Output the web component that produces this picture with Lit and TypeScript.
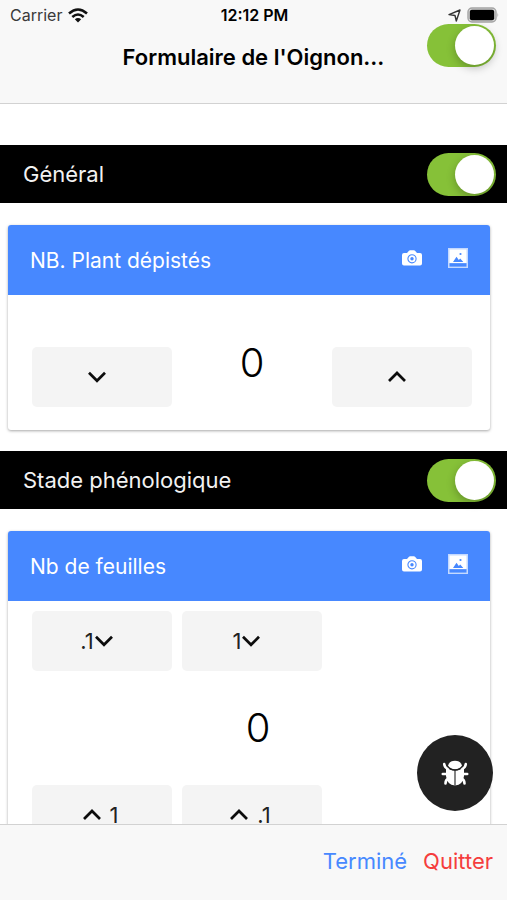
import { LitElement, html, css, svg } from "lit";
import { customElement, property } from "lit/decorators.js";

const chevronDown = html`<svg class="chevron" viewBox="0 0 20 20" aria-hidden="true">
  <path d="M2 5.800 L10 13.800 L18 5.800" fill="none" stroke="#0c0c0c" stroke-width="2.700" />
</svg>`;

const chevronUp = html`<svg class="chevron" viewBox="0 0 20 20" aria-hidden="true">
  <path d="M2 14 L10 6 L18 14" fill="none" stroke="#0c0c0c" stroke-width="2.700" />
</svg>`;

const cameraIcon = html`<svg viewBox="0 0 20 16" width="20" height="16" aria-hidden="true">
  <path d="M2 3 H5 L7 .8 Q7.400 .3 8 .3 H12 Q12.600 .3 13 .8 L15 3 H18 Q20 3 20 5 V13.500 Q20 15.500 18 15.500 H2 Q0 15.500 0 13.500 V5 Q0 3 2 3 Z" fill="#fff" />
  <circle cx="10" cy="8.800" r="4.100" fill="none" stroke="#4788ff" stroke-width="1.100" />
  <circle cx="10" cy="8.800" r="1.700" fill="#4788ff" />
</svg>`;

const pictureIcon = html`<svg viewBox="0 0 20 20" width="20" height="20" aria-hidden="true">
  <path d="M0 0 H20 V20 H0 Z" fill="#c4d9ff" />
  <path d="M1.500 1.500 H18.500 V15 H1.500 Z" fill="#fff" />
  <path d="M1.500 15.200 H18.500 V18.600 H1.500 Z" fill="#4788ff" />
  <path d="M5 14 L8.500 8.800 L10.800 12 L12.200 10.600 L15.300 14 Z" fill="#4788ff" />
  <circle cx="12.500" cy="6" r="1.100" fill="#4788ff" />
</svg>`;

const bugLegs = svg`<path d="M3.200 4 Q3.500 7.500 7 9 M24.800 4 Q24.500 7.500 21 9 M6 14 H1.800 M22 14 H26.200 M7 19 Q4.500 20 4.500 23.500 M21 19 Q23.500 20 23.500 23.500"
  fill="none" stroke="#fff" stroke-width="2.600" stroke-linecap="round" />`;

const bugIcon = html`<svg viewBox="0 0 28 26" width="28" height="26" aria-hidden="true">
  ${bugLegs}
  <path d="M7 5.500 Q8.500 .8 14 .8 Q19.500 .8 21 5.500 Q18.500 9.300 14 9.300 Q9.500 9.300 7 5.500 Z" fill="#fff" />
  <path d="M5 7 Q9 10.800 14 10.800 Q19 10.800 23 7 V16 Q22 25 14 25.500 Q6 25 5 16 Z" fill="#fff" />
  <path d="M5.500 5.500 Q9 10 14 10 Q19 10 22.500 5.500 M14 10 V25.500" fill="none" stroke="#222" stroke-width="1.100" />
</svg>`;

const switchStyles = css`
  .switch {
    appearance: none;
    flex: none;
    display: flex;
    justify-content: flex-start;
    box-sizing: border-box;
    width: 69px;
    height: 43px;
    margin: 0;
    padding: 2px;
    border-radius: 22px;
    background: #c8c8c8;
    cursor: pointer;
  }
  .switch:checked {
    background: #86c138;
    justify-content: flex-end;
  }
  .switch::before {
    content: "";
    width: 39px;
    height: 39px;
    border-radius: 50%;
    background: #fff;
    box-shadow: 0 3px 8px rgba(0, 0, 0, 0.25);
  }
`;

@customElement("section-bar")
class SectionBar extends LitElement {
  @property() heading = "";

  static styles = [
    switchStyles,
    css`
      :host {
        display: block;
      }
      .bar {
        display: flex;
        align-items: center;
        justify-content: space-between;
        height: 58px;
        padding: 0 11px 0 23px;
        background: #000;
        color: #f2f2f2;
        font-size: 22px;
      }
    `,
  ];

  render() {
    return html`<label class="bar">
      <span>${this.heading}</span>
      <input class="switch" type="checkbox" checked />
    </label>`;
  }
}

@customElement("counter-card")
class CounterCard extends LitElement {
  @property() heading = "";
  @property({ type: Boolean }) fine = false;
  @property({ type: Number }) value = 0;

  static styles = css`
    :host {
      display: block;
      margin: 22px 17px 21px 8px;
      border-radius: 3px;
      background: #fff;
      box-shadow: 0 1px 3px rgba(0, 0, 0, 0.35);
    }
    .head {
      display: flex;
      align-items: center;
      gap: 26px;
      height: 70px;
      padding: 0 22px;
      border-radius: 3px 3px 0 0;
      background: #4788ff;
      color: #fff;
    }
    h2 {
      flex: 1;
      margin: 0;
      font-size: 21px;
      font-weight: 400;
    }
    .tool {
      display: flex;
      margin: 0 0 4px;
      padding: 0;
      border: 0;
      background: none;
    }
    .body {
      display: grid;
      grid-template-columns: repeat(3, 1fr);
      column-gap: 10px;
      padding: 52px 18px 23px 24px;
    }
    .body.fine {
      padding-top: 10px;
    }
    .step {
      display: flex;
      align-items: center;
      justify-content: center;
      height: 60px;
      padding: 0 10px 0 0;
      border: 0;
      border-radius: 5px;
      background: #f4f4f4;
      color: #222;
      font: inherit;
      font-size: 22px;
    }
    .fine .up {
      grid-row: 3;
      gap: 8px;
      padding: 0 4px 0 0;
    }
    .chevron {
      width: 20px;
      height: 20px;
    }
    .value {
      color: #000;
      font-size: 40px;
      font-weight: 300;
      line-height: 32px;
      text-align: center;
    }
    .fine .value {
      grid-column: 2;
      padding-left: 12px;
      line-height: 114px;
    }
  `;

  private add(amount: number) {
    this.value = Math.max(0, Math.round((this.value + amount) * 10) / 10);
  }

  private plainBody() {
    return html`<div class="body">
      <button class="step" aria-label="Diminuer" @click=${() => this.add(-1)}>${chevronDown}</button>
      <output class="value">${this.value}</output>
      <button class="step" aria-label="Augmenter" @click=${() => this.add(1)}>${chevronUp}</button>
    </div>`;
  }

  private fineBody() {
    return html`<div class="body fine">
      <button class="step" @click=${() => this.add(-0.1)}>.1${chevronDown}</button>
      <button class="step" @click=${() => this.add(-1)}>1${chevronDown}</button>
      <output class="value">${this.value}</output>
      <button class="step up" @click=${() => this.add(1)}>${chevronUp}<span>1</span></button>
      <button class="step up" @click=${() => this.add(0.1)}>${chevronUp}<span>.1</span></button>
    </div>`;
  }

  render() {
    return html`
      <div class="head">
        <h2>${this.heading}</h2>
        <button class="tool" aria-label="Prendre une photo">${cameraIcon}</button>
        <button class="tool" aria-label="Choisir une image">${pictureIcon}</button>
      </div>
      ${this.fine ? this.fineBody() : this.plainBody()}
    `;
  }
}

@customElement("app-root")
class AppRoot extends LitElement {
  static styles = [
    switchStyles,
    css`
      :host {
        display: flex;
        flex-direction: column;
        height: 100vh;
        background: #fff;
        color: #000;
        font-family: Inter, "Liberation Sans", sans-serif;
      }
      header {
        flex: none;
        border-bottom: 1px solid #d2d2d2;
        background: #f8f8f8;
      }
      .status {
        display: grid;
        grid-template-columns: 1fr auto 1fr;
        align-items: center;
        height: 18px;
        padding: 6px 8px 0 10px;
        font-size: 16px;
        line-height: 18px;
      }
      .carrier {
        display: flex;
        align-items: center;
        gap: 6px;
        color: #3a3a3a;
      }
      .time {
        font-weight: 600;
      }
      .power {
        display: flex;
        align-items: center;
        justify-content: flex-end;
        gap: 6px;
      }
      .toolbar {
        display: grid;
        grid-template-columns: 1fr auto 1fr;
        align-items: start;
        height: 79px;
        padding: 0 11px;
      }
      h1 {
        grid-column: 2;
        margin: 0;
        font-size: 22px;
        font-weight: 600;
        line-height: 66px;
        white-space: nowrap;
      }
      .toolbar .switch {
        justify-self: end;
      }
      .content {
        position: relative;
        flex: 1;
        display: flex;
        min-height: 0;
      }
      main {
        flex: 1;
        overflow-y: auto;
        padding-top: 41px;
        scrollbar-width: none;
      }
      .bug {
        position: absolute;
        right: 14px;
        bottom: 13px;
        display: flex;
        align-items: center;
        justify-content: center;
        width: 76px;
        height: 76px;
        padding: 0;
        border: 0;
        border-radius: 50%;
        background: #222;
      }
      footer {
        flex: none;
        display: flex;
        align-items: center;
        justify-content: flex-end;
        gap: 16px;
        height: 72px;
        padding: 0 14px 3px;
        border-top: 1px solid #d2d2d2;
        background: #f8f8f8;
      }
      .action {
        padding: 0;
        border: 0;
        background: none;
        color: #4788ff;
        font: inherit;
        font-size: 22px;
      }
      .action.quit {
        color: #f53d3d;
      }
    `,
  ];

  render() {
    return html`
      <header>
        <div class="status">
          <span class="carrier">
            Carrier
            <svg viewBox="0 0 20 15" width="20" height="15" aria-hidden="true">
              <g fill="none" stroke="#111" stroke-width="2.600">
                <path d="M1 5.400 Q10 -2.400 19 5.400" />
                <path d="M4.300 9 Q10 4 15.700 9" />
              </g>
              <path d="M6.800 11.300 Q10 8.700 13.200 11.300 L10 14.600 Z" fill="#111" />
            </svg>
          </span>
          <span class="time">12:12 PM</span>
          <span class="power">
            <svg viewBox="0 0 13 13" width="13" height="13" aria-hidden="true">
              <path d="M1 5.600 L12 1 L8.300 12 L7 6.500 Z" fill="none" stroke="#333" stroke-width="1.400" stroke-linejoin="round" />
            </svg>
            <svg viewBox="0 0 32 16" width="32" height="16" aria-hidden="true">
              <rect x="1" y="1" width="28" height="14" rx="4" fill="#d8d8d8" stroke="#a4a4a4" stroke-width="1.400" />
              <rect x="2.800" y="2.800" width="24.400" height="10.400" rx="2" fill="#000" />
              <path d="M30.500 5.500 Q32 8 30.500 10.500 Z" fill="#a4a4a4" />
            </svg>
          </span>
        </div>
        <div class="toolbar">
          <h1>Formulaire de l'Oignon...</h1>
          <input class="switch" type="checkbox" checked aria-label="Formulaire de l'Oignon" />
        </div>
      </header>
      <div class="content">
        <main>
          <section-bar heading="Général"></section-bar>
          <counter-card heading="NB. Plant dépistés"></counter-card>
          <section-bar heading="Stade phénologique"></section-bar>
          <counter-card heading="Nb de feuilles" fine></counter-card>
        </main>
        <button class="bug" aria-label="Ravageurs">${bugIcon}</button>
      </div>
      <footer>
        <button class="action">Terminé</button>
        <button class="action quit">Quitter</button>
      </footer>
    `;
  }
}
